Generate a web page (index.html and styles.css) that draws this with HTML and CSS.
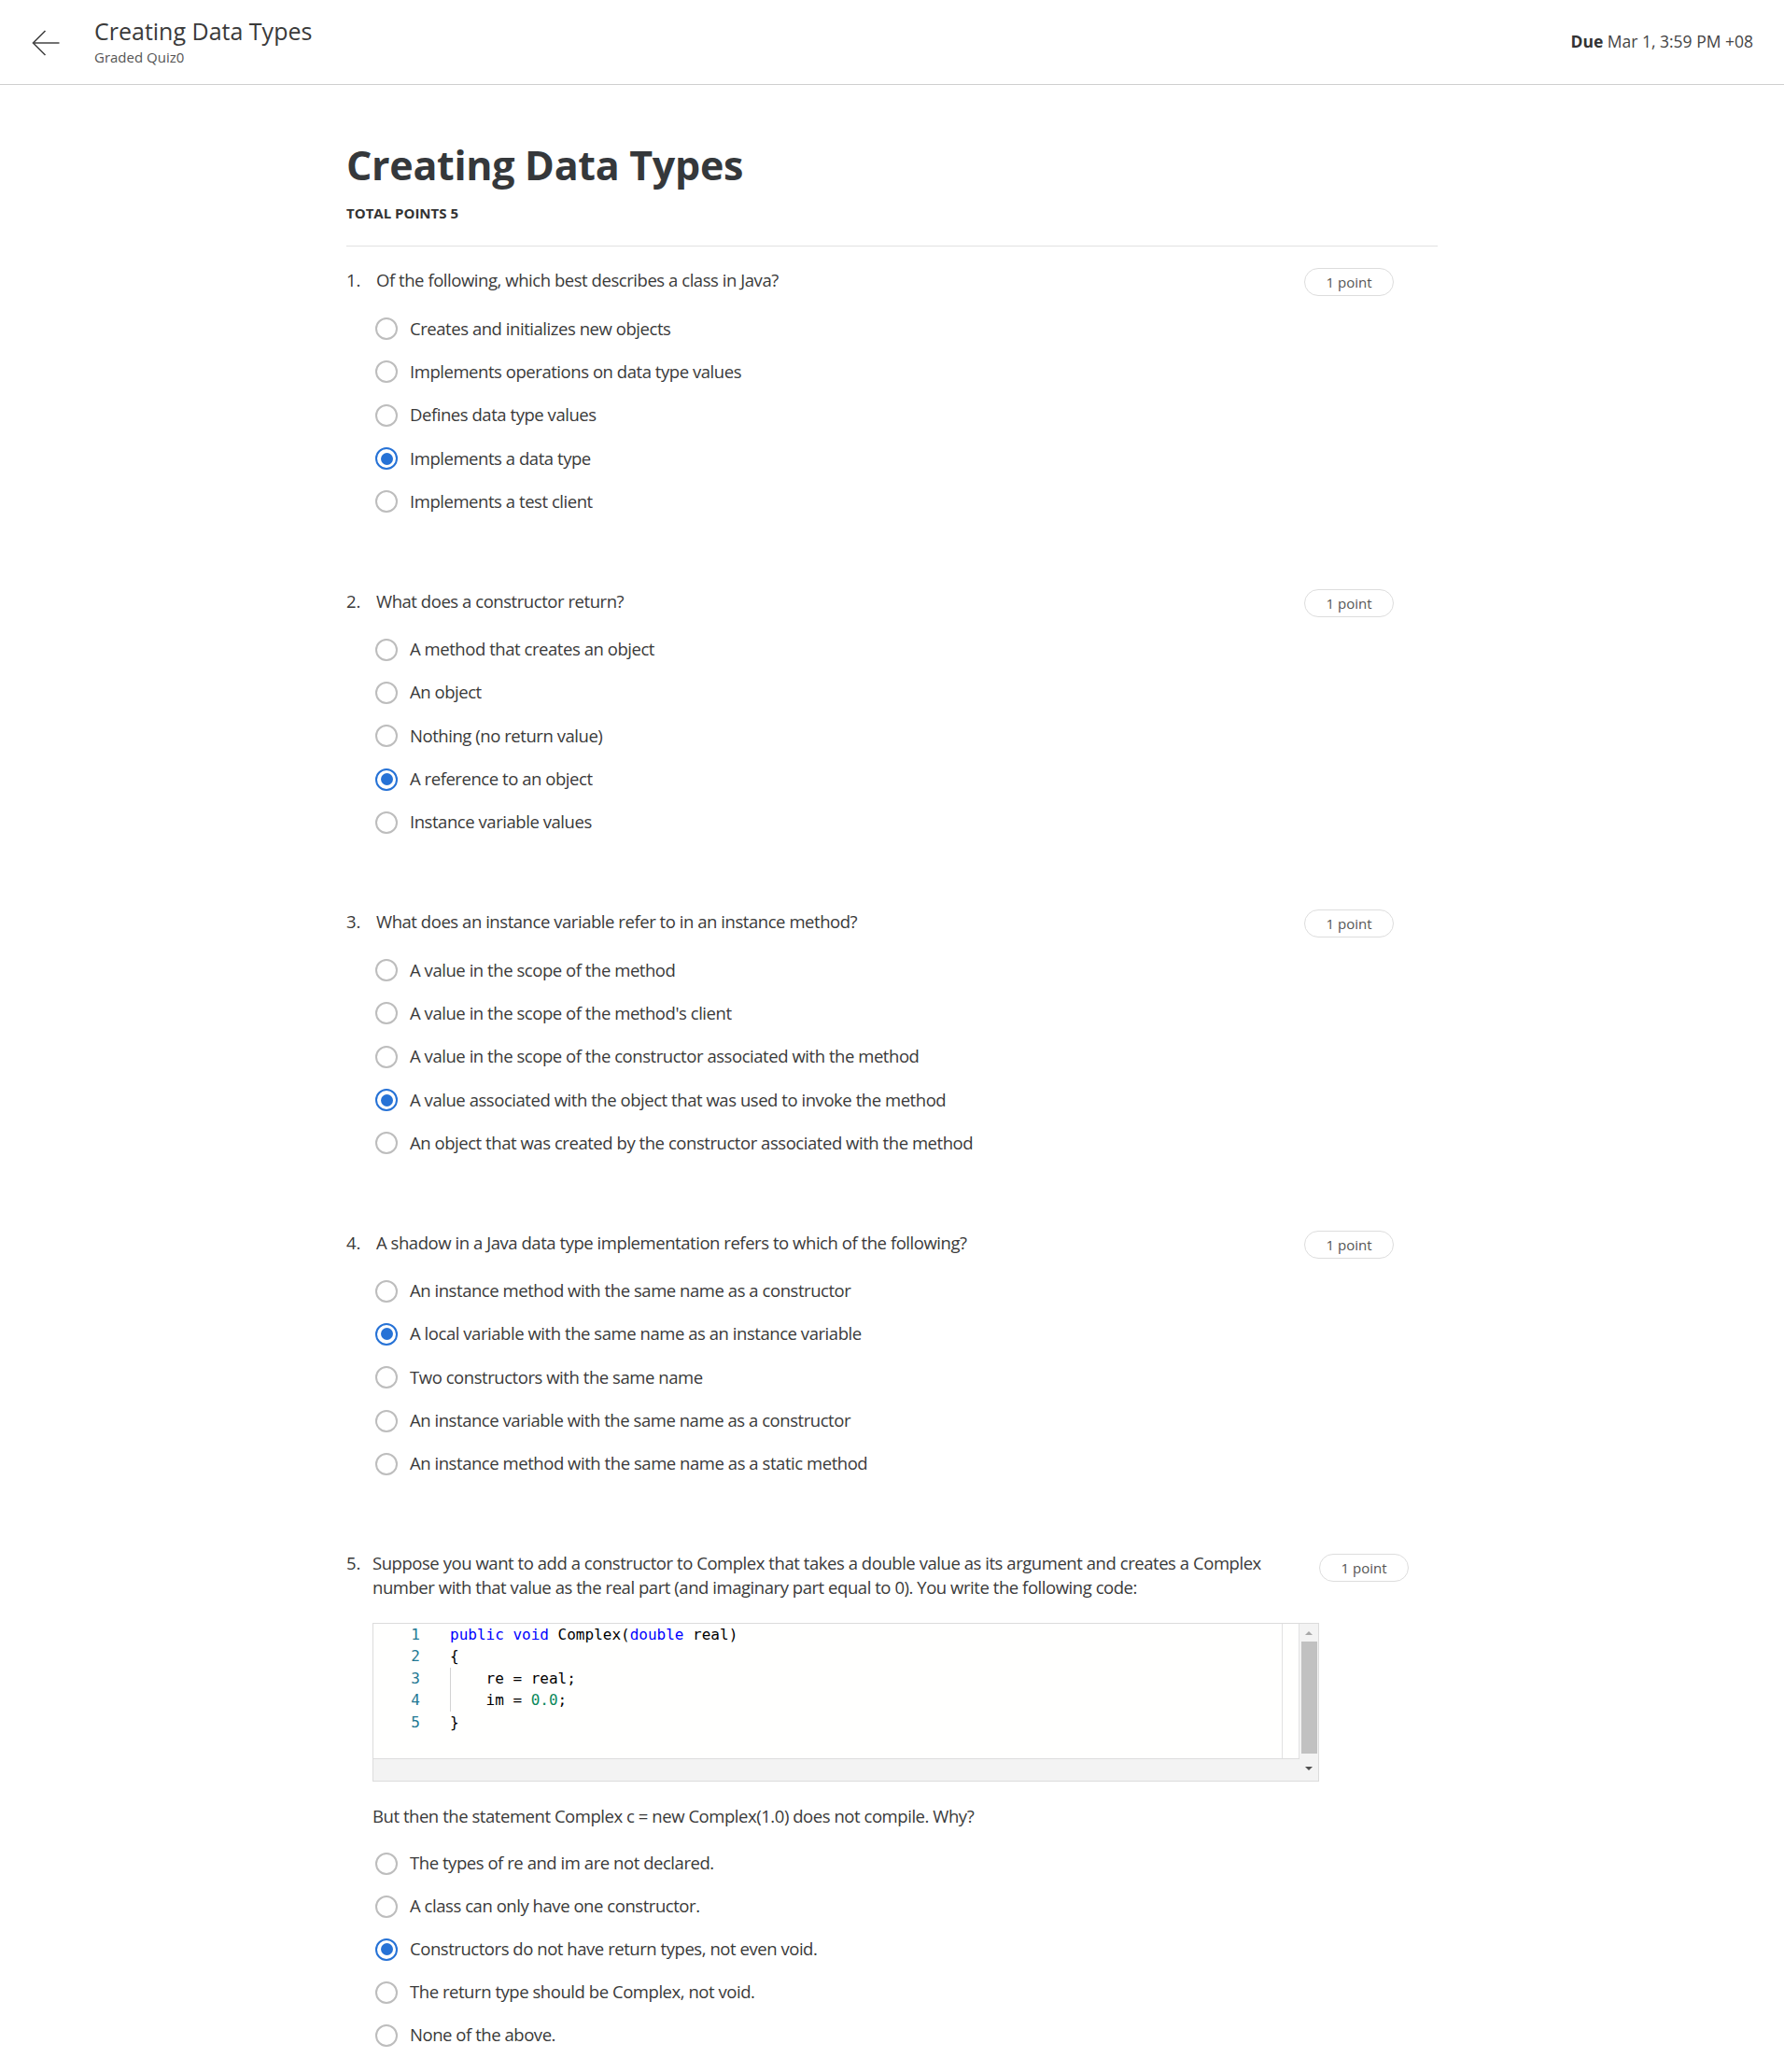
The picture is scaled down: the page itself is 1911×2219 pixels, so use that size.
FILE: index.html
```html
<!DOCTYPE html>
<html lang="en">
<head>
<meta charset="utf-8">
<title>Creating Data Types</title>
<link rel="stylesheet" href="styles.css">
</head>
<body>
<header class="topbar">
  <span class="back" aria-label="Back">
    <svg width="30" height="28" viewBox="0 0 30 28"><path d="M29.5 14H1.5M14.5 1L1.5 14l13 13" fill="none" stroke="#444" stroke-width="1.6"/></svg>
  </span>
  <div class="titles">
    <div class="t-main">Creating Data Types</div>
    <div class="t-sub">Graded Quiz0</div>
  </div>
  <div class="due"><b>Due</b> Mar 1, 3:59 PM +08</div>
</header>

<main class="quiz">
  <h1 class="quiz-title">Creating Data Types</h1>
  <div class="total">TOTAL POINTS 5</div>
  <hr class="divider">

  <div class="questions">
    <section class="question">
      <div class="q-head"><span class="q-num">1.</span><div class="q-text">Of the following, which best describes a class in Java?</div><span class="pill">1 point</span></div>
      <ul class="options">
        <li class="option"><span class="radio"></span><span class="label">Creates and initializes new objects</span></li>
        <li class="option"><span class="radio"></span><span class="label">Implements operations on data type values</span></li>
        <li class="option"><span class="radio"></span><span class="label">Defines data type values</span></li>
        <li class="option"><span class="radio checked"></span><span class="label">Implements a data type</span></li>
        <li class="option"><span class="radio"></span><span class="label">Implements a test client</span></li>
      </ul>
    </section>

    <section class="question">
      <div class="q-head"><span class="q-num">2.</span><div class="q-text">What does a constructor return?</div><span class="pill">1 point</span></div>
      <ul class="options">
        <li class="option"><span class="radio"></span><span class="label">A method that creates an object</span></li>
        <li class="option"><span class="radio"></span><span class="label">An object</span></li>
        <li class="option"><span class="radio"></span><span class="label">Nothing (no return value)</span></li>
        <li class="option"><span class="radio checked"></span><span class="label">A reference to an object</span></li>
        <li class="option"><span class="radio"></span><span class="label">Instance variable values</span></li>
      </ul>
    </section>

    <section class="question">
      <div class="q-head"><span class="q-num">3.</span><div class="q-text">What does an instance variable refer to in an instance method?</div><span class="pill">1 point</span></div>
      <ul class="options">
        <li class="option"><span class="radio"></span><span class="label">A value in the scope of the method</span></li>
        <li class="option"><span class="radio"></span><span class="label">A value in the scope of the method's client</span></li>
        <li class="option"><span class="radio"></span><span class="label">A value in the scope of the constructor associated with the method</span></li>
        <li class="option"><span class="radio checked"></span><span class="label">A value associated with the object that was used to invoke the method</span></li>
        <li class="option"><span class="radio"></span><span class="label">An object that was created by the constructor associated with the method</span></li>
      </ul>
    </section>

    <section class="question">
      <div class="q-head"><span class="q-num">4.</span><div class="q-text">A shadow in a Java data type implementation refers to which of the following?</div><span class="pill">1 point</span></div>
      <ul class="options">
        <li class="option"><span class="radio"></span><span class="label">An instance method with the same name as a constructor</span></li>
        <li class="option"><span class="radio checked"></span><span class="label">A local variable with the same name as an instance variable</span></li>
        <li class="option"><span class="radio"></span><span class="label">Two constructors with the same name</span></li>
        <li class="option"><span class="radio"></span><span class="label">An instance variable with the same name as a constructor</span></li>
        <li class="option"><span class="radio"></span><span class="label">An instance method with the same name as a static method</span></li>
      </ul>
    </section>

    <section class="question question-long">
      <div class="q-head"><span class="q-num">5.</span><div class="q-text">Suppose you want to add a constructor to Complex that takes a double value as its argument and creates a Complex number with that value as the real part (and imaginary part equal to 0). You write the following code:</div><span class="pill">1 point</span></div>

      <div class="code">
        <div class="code-main">
          <div class="code-area">
            <div class="gutter">
              <div>1</div><div>2</div><div>3</div><div>4</div><div>5</div>
            </div>
            <div class="lines">
              <div class="ln"><span class="kw">public</span> <span class="kw">void</span> Complex(<span class="kw">double</span> real)</div>
              <div class="ln">{</div>
              <div class="ln"><span class="indent"></span>re = real;</div>
              <div class="ln"><span class="indent"></span>im = <span class="num">0.0</span>;</div>
              <div class="ln">}</div>
            </div>
            <div class="ruler"></div>
          </div>
          <div class="hscroll"></div>
        </div>
        <div class="vscroll">
          <span class="arr-up"></span>
          <span class="thumb"></span>
          <span class="arr-down"></span>
        </div>
      </div>

      <p class="but-then">But then the statement Complex c = new Complex(1.0) does not compile. Why?</p>
      <ul class="options">
        <li class="option"><span class="radio"></span><span class="label">The types of re and im are not declared.</span></li>
        <li class="option"><span class="radio"></span><span class="label">A class can only have one constructor.</span></li>
        <li class="option"><span class="radio checked"></span><span class="label">Constructors do not have return types, not even void.</span></li>
        <li class="option"><span class="radio"></span><span class="label">The return type should be Complex, not void.</span></li>
        <li class="option"><span class="radio"></span><span class="label">None of the above.</span></li>
      </ul>
    </section>
  </div>
</main>
</body>
</html>
```

FILE: styles.css
```css
* { box-sizing: border-box; }

html, body {
  margin: 0;
  padding: 0;
  background: #ffffff;
}

body {
  font-family: "Open Sans", "Noto Sans", sans-serif;
  color: #333333;
}

/* ---------- top bar ---------- */
.topbar {
  display: flex;
  align-items: center;
  height: 91px;
  padding: 0 33px 0 34px;
  border-bottom: 1px solid #cfcfcf;
}

.back {
  display: flex;
  width: 30px;
  height: 28px;
  margin-top: 1px;
}

.titles {
  margin-left: 37px;
  margin-top: -2px;
}

.t-main {
  font-size: 25px;
  line-height: 30px;
  color: #3a3a3a;
}

.t-sub {
  margin-top: 3px;
  font-size: 15px;
  line-height: 20px;
  color: #555555;
}

.due {
  margin-left: auto;
  font-size: 17.5px;
  line-height: 24px;
  color: #444444;
  margin-top: -2px;
}

.due b {
  font-weight: 700;
  color: #333333;
}

/* ---------- quiz ---------- */
.quiz {
  width: 1169px;
  margin: 0 auto;
  padding: 58.5px 0 20px;
}

.quiz-title {
  margin: 0;
  font-size: 43px;
  line-height: 53px;
  letter-spacing: -0.3px;
  font-weight: 700;
  color: #35383b;
}

.total {
  margin-top: 15.7px;
  font-size: 15px;
  line-height: 20px;
  font-weight: 700;
  color: #333333;
}

.divider {
  margin: 24.8px 0 0;
  border: 0;
  border-top: 1px solid #e1e1e1;
  height: 0;
}

.questions {
  display: flex;
  flex-direction: column;
  gap: 79.8px;
  padding-top: 23.2px;
}

.q-head {
  display: flex;
  align-items: flex-start;
}

.q-num {
  flex: none;
  width: 32px;
  font-size: 18.5px;
  line-height: 26px;
  color: #3a3a3a;
}

.q-text {
  flex: 1;
  font-size: 18.5px;
  line-height: 26px;
  letter-spacing: -0.45px;
  color: #3a3a3a;
}

.pill {
  flex: none;
  display: flex;
  align-items: center;
  justify-content: center;
  width: 96px;
  height: 30px;
  margin-left: 20px;
  margin-right: 47px;
  border: 1px solid #dddddd;
  border-radius: 15px;
  font-size: 15px;
  color: #555555;
}

.options {
  list-style: none;
  margin: 19px 0 0;
  padding: 0;
  display: flex;
  flex-direction: column;
  gap: 16.8px;
}

.option {
  display: flex;
  align-items: flex-start;
  padding-left: 31px;
}

.radio {
  flex: none;
  width: 24px;
  height: 24px;
  margin-top: 4px;
  border: 2px solid #bdbdbd;
  border-radius: 50%;
  display: flex;
  align-items: center;
  justify-content: center;
}

.radio.checked {
  border: 2.5px solid #2672d6;
}

.radio.checked::after {
  content: "";
  width: 13px;
  height: 13px;
  border-radius: 50%;
  background: #2672d6;
}

.label {
  margin-left: 13px;
  padding-top: 1.5px;
  font-size: 18.5px;
  line-height: 28px;
  letter-spacing: -0.45px;
  color: #3a3a3a;
}

/* ---------- question 5 ---------- */
.question-long .q-num {
  width: 28px;
}

.question-long .q-text {
  line-height: 25.5px;
}

.question-long .pill {
  margin-right: 31px;
  margin-top: 3px;
}

.question-long .options {
  gap: 16.5px;
  margin-top: 22px;
}

.code {
  display: flex;
  width: 1014px;
  height: 170px;
  margin: 25.8px 0 0 28px;
  border: 1px solid #dcdcdc;
  background: #fffffe;
}

.code-main {
  flex: 1;
  display: flex;
  flex-direction: column;
}

.code-area {
  flex: 1;
  display: flex;
  padding-top: 0;
  border-right: 1px solid #e2e2e2;
}

.gutter {
  flex: none;
  width: 50px;
  text-align: right;
  font-family: "DejaVu Sans Mono", "Liberation Mono", monospace;
  font-size: 16px;
  line-height: 23.5px;
  color: #237893;
}

.lines {
  flex: 1;
  padding-left: 32px;
  font-family: "DejaVu Sans Mono", "Liberation Mono", monospace;
  font-size: 16px;
  line-height: 23.5px;
  color: #000000;
}

.ln {
  height: 23.5px;
  white-space: pre;
}

.indent {
  display: inline-block;
  width: 38.5px;
  height: 23.5px;
  vertical-align: top;
  border-left: 1px solid #d3d3d3;
}

.kw { color: #0000ff; }
.num { color: #09885a; }

.ruler {
  flex: none;
  width: 18px;
  border-left: 1px solid #e2e2e2;
}

.hscroll {
  flex: none;
  height: 24px;
  border-top: 1px solid #dddddd;
  background: #f3f3f3;
}

.vscroll {
  flex: none;
  width: 20px;
  background: #f3f3f3;
  display: flex;
  flex-direction: column;
  align-items: center;
}

.arr-up {
  margin-top: 8px;
  width: 0;
  height: 0;
  border-left: 4.5px solid transparent;
  border-right: 4.5px solid transparent;
  border-bottom: 4px solid #a8a8a8;
}

.thumb {
  margin-top: 7px;
  width: 17px;
  height: 120px;
  background: #c1c1c1;
}

.arr-down {
  margin-top: 14px;
  width: 0;
  height: 0;
  border-left: 4.5px solid transparent;
  border-right: 4.5px solid transparent;
  border-top: 4px solid #505050;
}

.but-then {
  margin: 24px 0 0;
  padding-left: 28px;
  font-size: 18.5px;
  line-height: 26px;
  letter-spacing: -0.45px;
  color: #3a3a3a;
}
```
